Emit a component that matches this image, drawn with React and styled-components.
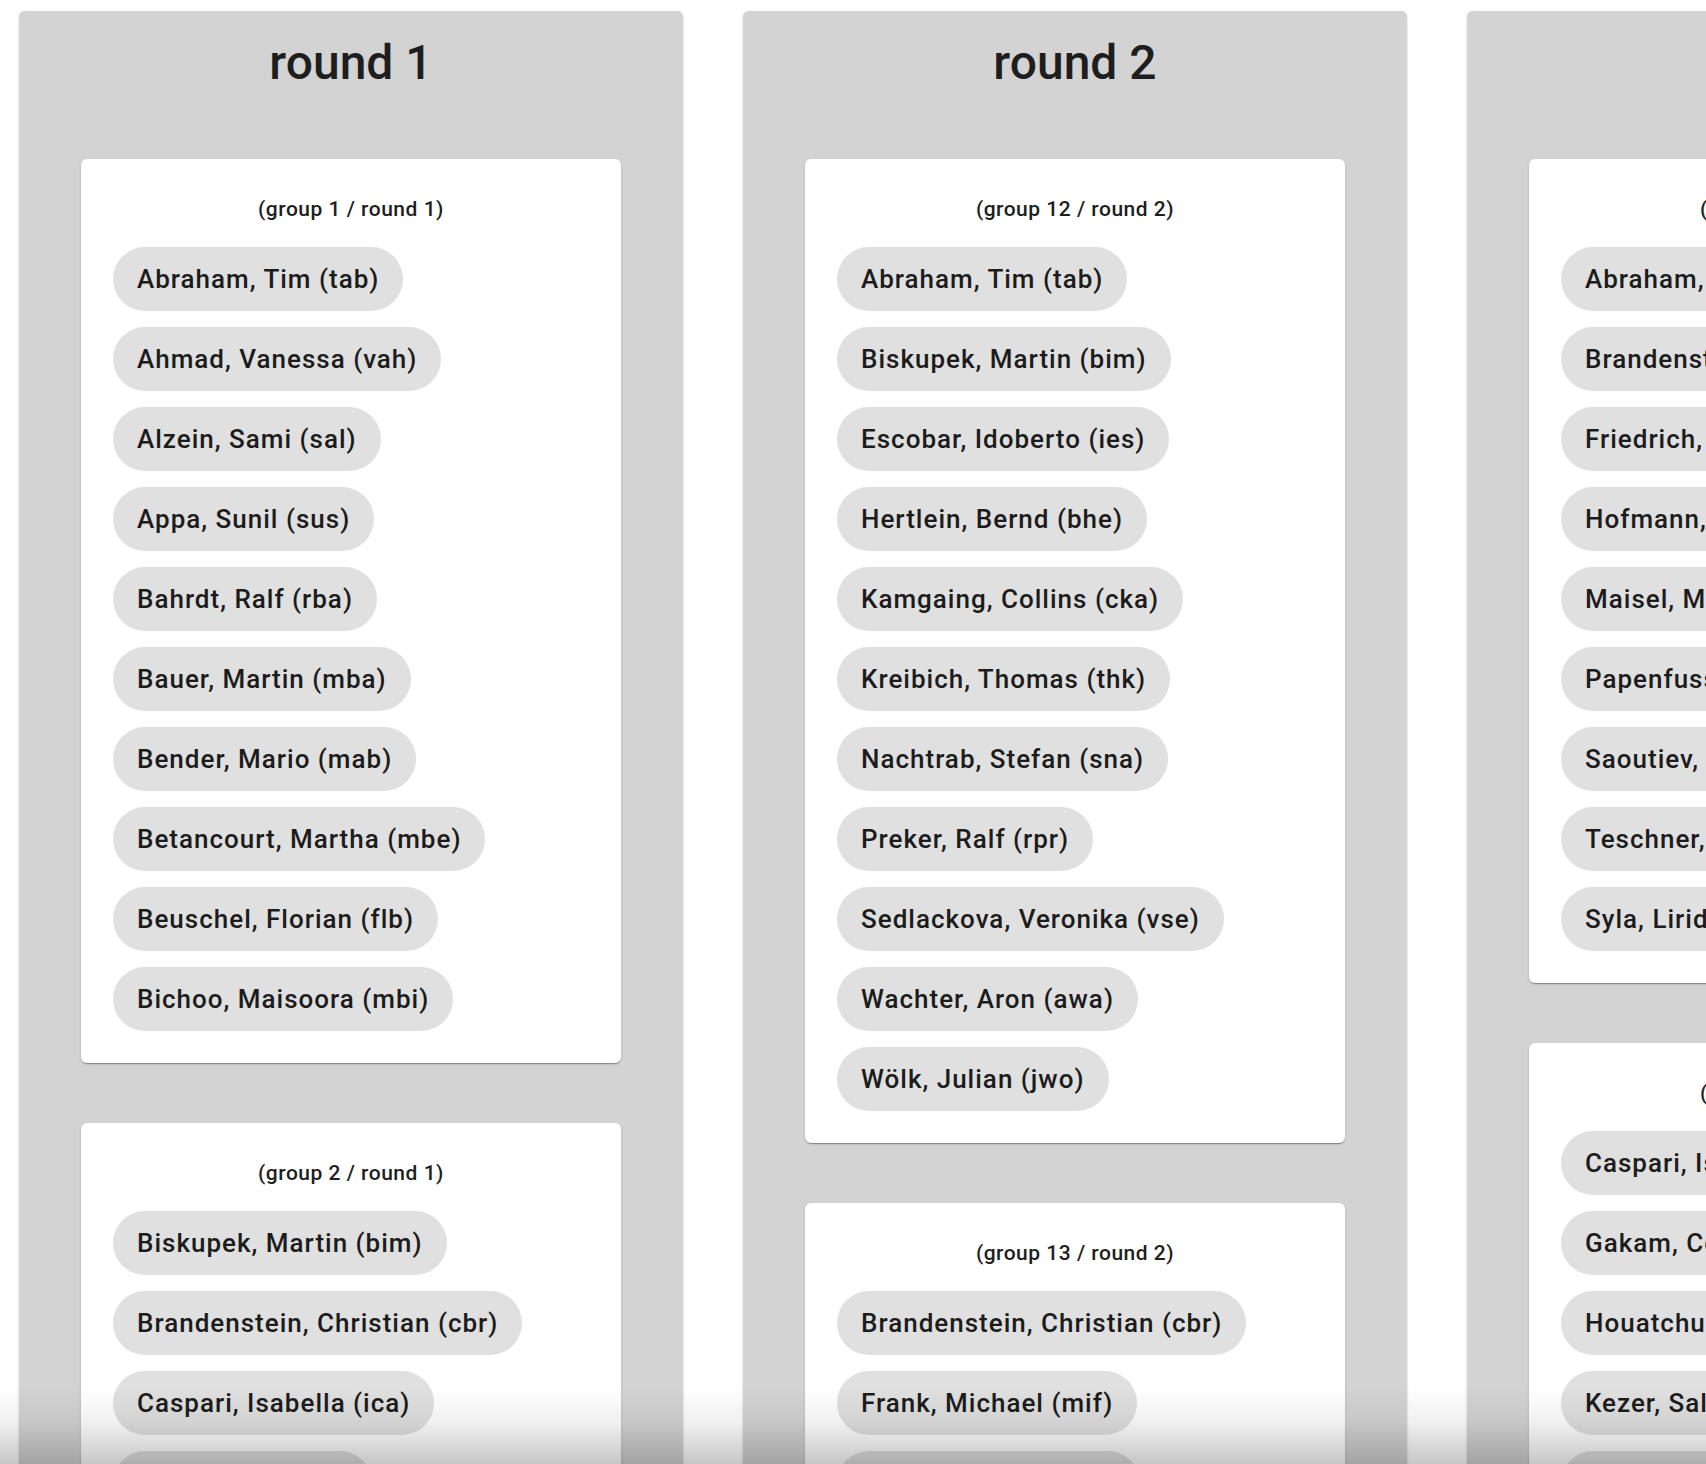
import React from "react";
import styled, { createGlobalStyle } from "styled-components";

const GlobalStyle = createGlobalStyle`
    html, body {
        margin : 0;
        padding : 0;
        background : #ffffff;
        overflow : hidden;
        font-family : Roboto, "Liberation Sans", Arial, sans-serif;
    }
`

const Board = styled.div`
    display : flex;
    align-items : flex-start;
    gap : 60px;
    padding : 11px 0 0 19px;
`

const RoundColumn = styled.section`
    flex : 0 0 664px;
    box-sizing : border-box;
    padding : 24px 62px 60px;
    background : #d3d3d3;
    border-radius : 6px;
    box-shadow : 0 1px 3px rgba(0,0,0,0.12), 0 1px 2px rgba(0,0,0,0.08);
    display : flex;
    flex-direction : column;
    gap : 60px;
`

const RoundTitle = styled.h2`
    margin : 0 0 8px;
    height : 56px;
    line-height : 56px;
    text-align : center;
    font-size : 48px;
    font-weight : 500;
    color : #1e1e1e;
`

const GroupCard = styled.div`
    background : #ffffff;
    border-radius : 6px;
    padding : 38px 32px 32px;
    box-shadow : 0 2px 1px -1px rgba(0,0,0,0.2), 0 1px 1px 0 rgba(0,0,0,0.14), 0 1px 3px 0 rgba(0,0,0,0.12);
`

const GroupLabel = styled.div`
    text-align : center;
    font-size : 21px;
    font-weight : 500;
    letter-spacing : 0.5px;
    line-height : 24px;
    color : #1e1e1e;
    margin-bottom : 26px;
`

const ChipList = styled.div`
    display : flex;
    flex-direction : column;
    align-items : flex-start;
    gap : 16px;
`

const Chip = styled.div`
    display : inline-flex;
    align-items : center;
    height : 64px;
    padding : 0 24px;
    border-radius : 32px;
    background : #e0e0e0;
    font-size : 26px;
    font-weight : 500;
    letter-spacing : 1px;
    color : #1c1c1c;
    white-space : nowrap;
`

const BottomFade = styled.div`
    position : fixed;
    left : 0;
    right : 0;
    bottom : 0;
    height : 76px;
    pointer-events : none;
    background : linear-gradient(to bottom, rgba(0,0,0,0) 0%, rgba(0,0,0,0.06) 45%, rgba(0,0,0,0.22) 100%);
`

const rounds = [
    {
        round : 1,
        groups : [
            { id : 1, members : [
                "Abraham, Tim (tab)", "Ahmad, Vanessa (vah)", "Alzein, Sami (sal)", "Appa, Sunil (sus)",
                "Bahrdt, Ralf (rba)", "Bauer, Martin (mba)", "Bender, Mario (mab)", "Betancourt, Martha (mbe)",
                "Beuschel, Florian (flb)", "Bichoo, Maisoora (mbi)",
            ]},
            { id : 2, members : [
                "Biskupek, Martin (bim)", "Brandenstein, Christian (cbr)", "Caspari, Isabella (ica)",
                "Eck, Daniel (dae)", "Escobar, Idoberto (ies)", "Frank, Michael (mif)",
            ]},
        ],
    },
    {
        round : 2,
        groups : [
            { id : 12, members : [
                "Abraham, Tim (tab)", "Biskupek, Martin (bim)", "Escobar, Idoberto (ies)", "Hertlein, Bernd (bhe)",
                "Kamgaing, Collins (cka)", "Kreibich, Thomas (thk)", "Nachtrab, Stefan (sna)", "Preker, Ralf (rpr)",
                "Sedlackova, Veronika (vse)", "Wachter, Aron (awa)", "Wölk, Julian (jwo)",
            ]},
            { id : 13, members : [
                "Brandenstein, Christian (cbr)", "Frank, Michael (mif)", "Gakam, Cedric (cga)", "Hofmann, Jonas (joh)",
            ]},
        ],
    },
    {
        round : 3,
        groups : [
            { id : 23, members : [
                "Abraham, Tim (tab)", "Brandenstein, Christian (cbr)", "Friedrich, Lukas (luf)", "Hofmann, Jonas (joh)",
                "Maisel, Markus (mma)", "Papenfuss, Anna (apa)", "Saoutiev, Alexej (asa)", "Teschner, Paul (pte)",
                "Syla, Lirida (lsy)",
            ]},
            { id : 24, members : [
                "Caspari, Isabella (ica)", "Gakam, Cedric (cga)", "Houatchum, Rene (rho)", "Kezer, Salih (ske)",
                "Nachtrab, Stefan (sna)", "Wölk, Julian (jwo)",
            ]},
        ],
    },
]

function App(){
    return(
        <>
            <GlobalStyle />
            <Board>
                {rounds.map(r => (
                    <RoundColumn key={r.round}>
                        <RoundTitle>round {r.round}</RoundTitle>
                        {r.groups.map(g => (
                            <GroupCard key={g.id}>
                                <GroupLabel>(group {g.id} / round {r.round})</GroupLabel>
                                <ChipList>
                                    {g.members.map(m => <Chip key={m}>{m}</Chip>)}
                                </ChipList>
                            </GroupCard>
                        ))}
                    </RoundColumn>
                ))}
            </Board>
            <BottomFade />
        </>
    )
}

export default App
